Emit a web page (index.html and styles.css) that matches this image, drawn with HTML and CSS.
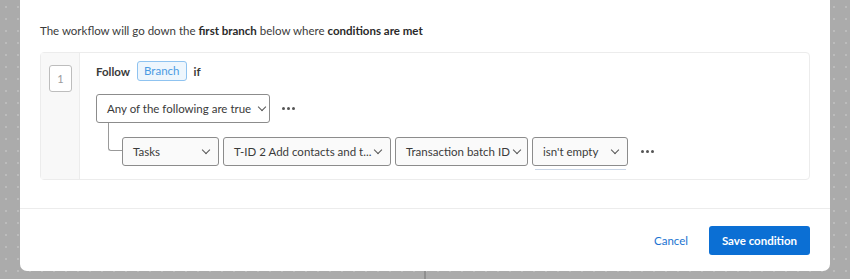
FILE: index.html
```html
<!DOCTYPE html>
<html lang="en">
<head>
    <meta charset="UTF-8">
    <title>Edit condition</title>
    <link rel="stylesheet" href="styles.css">
</head>
<body>
    <div class="canvas">
        <!-- Modal de condicion -->
        <div class="modal">
            <div class="modal-body">
                <p class="intro">The workflow will go down the <b>first branch</b> below where <b>conditions are met</b></p>

                <div class="branch-panel">
                    <div class="branch-index">
                        <span class="index-box">1</span>
                    </div>
                    <div class="branch-main">
                        <div class="follow-row">
                            <b>Follow</b>
                            <span class="pill">Branch</span>
                            <b>if</b>
                        </div>

                        <div class="group-row">
                            <div class="select select-group">
                                <span class="label">Any of the following are true</span>
                                <span class="chev"></span>
                            </div>
                            <span class="more"><i></i><i></i><i></i></span>
                        </div>

                        <div class="cond-row">
                            <span class="tree"></span>
                            <div class="select w-tasks"><span class="label">Tasks</span><span class="chev"></span></div>
                            <div class="select w-task"><span class="label">T-ID 2 Add contacts and t...</span><span class="chev"></span></div>
                            <div class="select w-field"><span class="label">Transaction batch ID</span><span class="chev"></span></div>
                            <div class="select w-op underlined"><span class="label">isn't empty</span><span class="chev"></span></div>
                            <span class="more"><i></i><i></i><i></i></span>
                        </div>
                    </div>
                </div>
            </div>

            <div class="modal-footer">
                <a class="btn-link" href="#">Cancel</a>
                <button class="btn-primary">Save condition</button>
            </div>
        </div>
    </div>
    <div class="rail"></div>
</body>
</html>
```

FILE: styles.css
```css
body {
    margin: 0;
    height: 279px;
    overflow: hidden;
    font-family: Lato, "Liberation Sans", sans-serif;
    font-size: 11.5px;
    color: #333333;
    background-color: #ababab;
    background-image: radial-gradient(circle, #bcbcbc 1px, transparent 1.5px);
    background-size: 12px 12px;
    background-position: 0 1px;
    position: relative;
}

.canvas {
    padding: 0 20px;
}

.modal {
    background-color: #ffffff;
    border-radius: 0 0 7px 7px;
    height: 271px;
    display: flex;
    flex-direction: column;
}

.modal-body {
    padding: 21px 20px 0 20px;
    height: 209px;
    box-sizing: border-box;
    border-bottom: 1px solid #ececec;
}

.intro {
    margin: 0 0 11px 0;
    line-height: 20px;
    color: #3b3b3b;
}

.intro b {
    color: #2a2a2a;
}

.branch-panel {
    display: flex;
    border: 1px solid #ececec;
    border-radius: 4px;
    height: 128px;
    box-sizing: border-box;
}

.branch-index {
    width: 39px;
    background-color: #f8f8f8;
    border-right: 1px solid #ececec;
    padding: 12px 0 0 8px;
    box-sizing: border-box;
}

.index-box {
    display: flex;
    align-items: center;
    justify-content: center;
    width: 21px;
    height: 25px;
    border: 1px solid #bdbdbd;
    border-radius: 3px;
    background-color: #ffffff;
    color: #9a9a9a;
    font-size: 11px;
}

.branch-main {
    padding: 8px 0 0 16px;
    flex: 1;
}

.follow-row {
    display: flex;
    align-items: center;
    gap: 7px;
    height: 20px;
    color: #3a3a3a;
}

.pill {
    border: 1px solid #8fc3f0;
    background-color: #eef6fd;
    color: #4b9be3;
    border-radius: 3px;
    padding: 0 6px;
    height: 18px;
    line-height: 18px;
}

.group-row {
    display: flex;
    align-items: center;
    gap: 12px;
    margin-top: 13px;
}

.select {
    display: flex;
    align-items: center;
    gap: 4px;
    height: 29px;
    box-sizing: border-box;
    border: 1px solid #8c8c8c;
    border-radius: 3px;
    background-color: #fafafa;
    padding: 0 7px 0 10px;
    color: #3a3a3a;
    white-space: nowrap;
}

.select .label {
    flex: 1;
}

.select-group {
    width: 174px;
    background-color: #ffffff;
}

.select-group .label {
    flex: none;
    margin-right: 4px;
}

.chev {
    flex: none;
    width: 5px;
    height: 5px;
    border-right: 1px solid #555555;
    border-bottom: 1px solid #555555;
    transform: rotate(45deg);
    margin: -4px 2px 0 0;
}

.more {
    display: flex;
    gap: 2px;
}

.more i {
    width: 3px;
    height: 3px;
    border-radius: 50%;
    background-color: #555555;
}

.cond-row {
    display: flex;
    align-items: center;
    gap: 4px;
    margin-top: 14px;
}

.tree {
    align-self: flex-start;
    width: 13px;
    height: 27px;
    margin: -14px -4px 0 12px;
    border-left: 1px solid #9a9a9a;
    border-bottom: 1px solid #9a9a9a;
    border-bottom-left-radius: 3px;
}

.w-tasks { width: 97px; }
.w-task { width: 168px; }
.w-field { width: 133px; }
.w-op { width: 96px; }

.underlined {
    position: relative;
}

.underlined::after {
    content: "";
    position: absolute;
    left: 2px;
    right: 1px;
    bottom: -5px;
    height: 1px;
    background-color: #c9d5e6;
}

.cond-row .more {
    margin-left: 9px;
}

.modal-footer {
    flex: 1;
    display: flex;
    align-items: center;
    justify-content: flex-end;
    gap: 21px;
    padding: 0 20px 0 0;
}

.btn-link {
    color: #1a73d1;
    text-decoration: none;
}

.btn-primary {
    background-color: #0b6fd4;
    color: #ffffff;
    border: none;
    border-radius: 3px;
    height: 29px;
    width: 101px;
    font-family: inherit;
    font-size: 11.5px;
    font-weight: 700;
}

.rail {
    position: absolute;
    left: 424px;
    top: 271px;
    width: 2px;
    height: 8px;
    background-color: #8f8f8f;
}
```
